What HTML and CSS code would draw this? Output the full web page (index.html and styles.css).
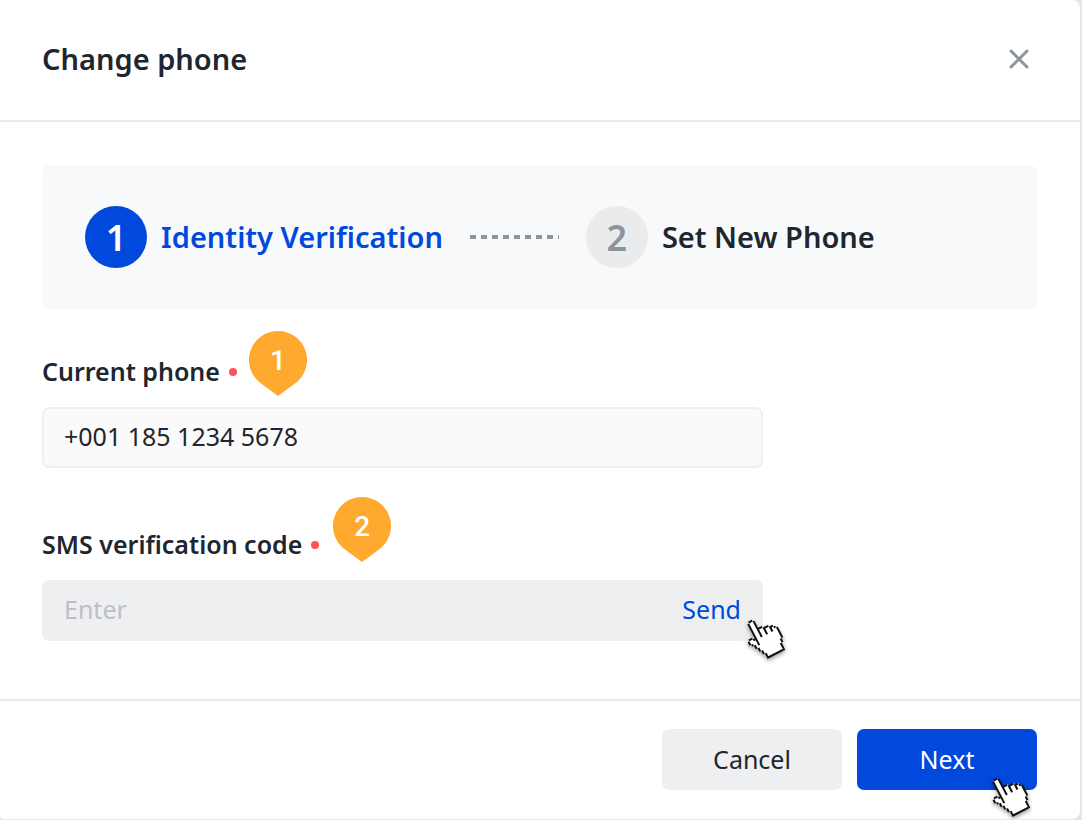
FILE: index.html
```html
<!DOCTYPE html>
<html lang="en">
<head>
    <meta charset="UTF-8">
    <meta name="viewport" content="width=device-width, initial-scale=1">
    <title>Change phone</title>
    <link rel="stylesheet" href="styles.css">
</head>
<body>
    <!-- Shared hand cursor, drawn on a pixel grid and tilted -->
    <svg class="symbols" aria-hidden="true">
        <symbol id="hand" viewBox="0 0 21 21" overflow="visible">
            <g transform="translate(2.2 1.3) rotate(-27.5) translate(-6 -0.5)">
                <path fill="#fff" d="M5 .5H7L7.5 5.5H10.5V6.5H13.5V7.5H15.5V9H16.5V15H15.5V17H14.5V20.5H5.5V18H4.5V16H3.5V14H2.5V12H1.5V11H.5V9H1V8.5H3V9.5H4.5V1H5Z"/>
                <path fill="none" stroke="#111" stroke-width="1" d="M5 .5h2M4.5 1v12M7.5 1v9M8 5.5h2M10.5 6v4M11 6.5h2M13.5 7v3M14 7.5h1M15.5 8v1M16.5 9v6M15.5 15v2M14.5 17v3M5 20.5h10M1 8.5h2M.5 9v2M3.5 9v1M1.5 11v1M2.5 12v2M3.5 14v2M4.5 16v2M5.5 18v2"/>
            </g>
        </symbol>
    </svg>

    <main class="modal">
        <header class="modal-header">
            <h1>Change phone</h1>
            <button type="button" class="close" aria-label="Close">
                <svg viewBox="0 0 20 20"><path d="M2 2 L18 18 M18 2 L2 18"/></svg>
            </button>
        </header>

        <form id="change-phone" class="modal-body">
            <ol class="steps">
                <li class="step active"><span class="step-number">1</span>Identity Verification</li>
                <li class="step-line" aria-hidden="true"></li>
                <li class="step"><span class="step-number">2</span>Set New Phone</li>
            </ol>

            <div class="field">
                <div class="label-row">
                    <label for="phone">Current phone</label>
                    <span class="required"></span>
                    <span class="pin">
                        <svg viewBox="0 0 58 65"><path d="M29 0 A29 29 0 0 1 46 52.5 L29 65 L12 52.5 A29 29 0 0 1 29 0 Z"/></svg>
                        <span class="pin-text">1</span>
                    </span>
                </div>
                <input type="text" id="phone" class="control" value="+001 185 1234 5678" readonly>
            </div>

            <div class="field">
                <div class="label-row">
                    <label for="code">SMS verification code</label>
                    <span class="required"></span>
                    <span class="pin raised">
                        <svg viewBox="0 0 58 65"><path d="M29 0 A29 29 0 0 1 46 52.5 L29 65 L12 52.5 A29 29 0 0 1 29 0 Z"/></svg>
                        <span class="pin-text">2</span>
                    </span>
                </div>
                <div class="control code-control">
                    <input type="text" id="code" placeholder="Enter">
                    <button type="button" class="send">Send</button>
                    <svg class="hand"><use href="#hand"/></svg>
                </div>
            </div>
        </form>

        <footer class="modal-footer">
            <button type="button" class="btn">Cancel</button>
            <button type="submit" form="change-phone" class="btn primary">Next
                <svg class="hand"><use href="#hand"/></svg>
            </button>
        </footer>
    </main>
</body>
</html>
```
FILE: styles.css
```css
* {
    box-sizing: border-box;
}

body {
    margin: 0;
    padding: 0 2px 1px 0;
    background: #e6e6e6;
    color: #20262e;
    font-family: "Noto Sans", sans-serif;
    font-size: 25px;
    line-height: 36px;
}

button,
input {
    font: inherit;
    color: inherit;
    border: none;
    padding: 0;
    background: none;
}

button {
    cursor: pointer;
}

.symbols {
    position: absolute;
    width: 0;
    height: 0;
}

.modal {
    background: #fff;
    border-radius: 0 8px 8px 4px;
    overflow: hidden;
}

.modal-header {
    display: flex;
    justify-content: space-between;
    align-items: center;
    height: 122px;
    padding: 0 50px 2px 42px;
    border-bottom: 2px solid #e9eaeb;
}

h1 {
    margin: 0;
    font-size: 29px;
    font-weight: 600;
}

.close {
    display: flex;
    padding: 1px;
}

.close svg {
    width: 20px;
    height: 20px;
    fill: none;
    stroke: #8d949e;
    stroke-width: 3;
    stroke-linecap: round;
}

.modal-body {
    padding: 43px 43px 58px 42px;
}

.steps {
    display: flex;
    align-items: center;
    margin: 0 0 44px;
    padding: 41px 43px;
    list-style: none;
    background: #f8f9fb;
    border-radius: 7px;
    font-size: 29px;
    font-weight: 600;
}

.step {
    display: flex;
    align-items: center;
    gap: 14px;
}

.step.active {
    color: #0049dc;
}

.step-number {
    display: flex;
    justify-content: center;
    align-items: center;
    width: 62px;
    height: 62px;
    padding-top: 2px;
    border-radius: 50%;
    background: #e9ebed;
    color: #8d949e;
    font-size: 36px;
}

.active .step-number {
    background: #0049dc;
    color: #fff;
}

.step-line {
    width: 89px;
    height: 4px;
    margin: 0 27px;
    background: repeating-linear-gradient(to right, #8d949e 0 6px, transparent 6px 11px);
}

.field + .field {
    margin-top: 58px;
}

.label-row {
    display: flex;
    align-items: center;
    margin-bottom: 18px;
    font-weight: 600;
}

.required {
    width: 8px;
    height: 8px;
    margin: 2px 0 0 9px;
    border-radius: 50%;
    background: #ff5358;
}

/* numbered callout beside the label */
.pin {
    position: relative;
    width: 58px;
    height: 36px;
    margin-left: 12px;
    text-align: center;
}

.pin svg {
    position: absolute;
    left: 0;
    bottom: -7px;
    width: 58px;
    height: 65px;
    fill: #ffa92f;
}

.pin-text {
    position: absolute;
    left: 0;
    right: 0;
    bottom: 10px;
    color: #fff;
    font-family: Roboto, sans-serif;
    font-size: 28px;
    font-weight: 500;
}

.pin.raised {
    margin: -14px 0 0 14px;
}

.control {
    display: block;
    width: 100%;
    max-width: 721px;
    height: 61px;
    padding: 0 20px 3px;
    border: 2px solid #efefef;
    border-radius: 7px;
    background: #fafafa;
}

.code-control {
    position: relative;
    display: flex;
    align-items: center;
    background: #eeeff1;
    border-color: #eeeff1;
}

.code-control input {
    flex: 1;
    min-width: 0;
}

.code-control input::placeholder {
    color: #bec0c7;
    opacity: 1;
}

.send {
    color: #0049dc;
}

.hand {
    position: absolute;
    right: -27px;
    bottom: -22px;
    width: 42px;
    height: 42px;
    overflow: visible;
    filter: drop-shadow(0 2px 2px rgba(0, 0, 0, 0.4));
    pointer-events: none;
}

.modal-footer {
    display: flex;
    justify-content: flex-end;
    gap: 15px;
    padding: 28px 43px 29px;
    border-top: 2px solid #e9eaeb;
}

.btn {
    position: relative;
    width: 180px;
    height: 61px;
    padding-bottom: 2px;
    border-radius: 7px;
    background: #eeeff1;
}

.primary {
    background: #0049dc;
    color: #fff;
}

.primary .hand {
    right: 4px;
    bottom: -29px;
}
```
